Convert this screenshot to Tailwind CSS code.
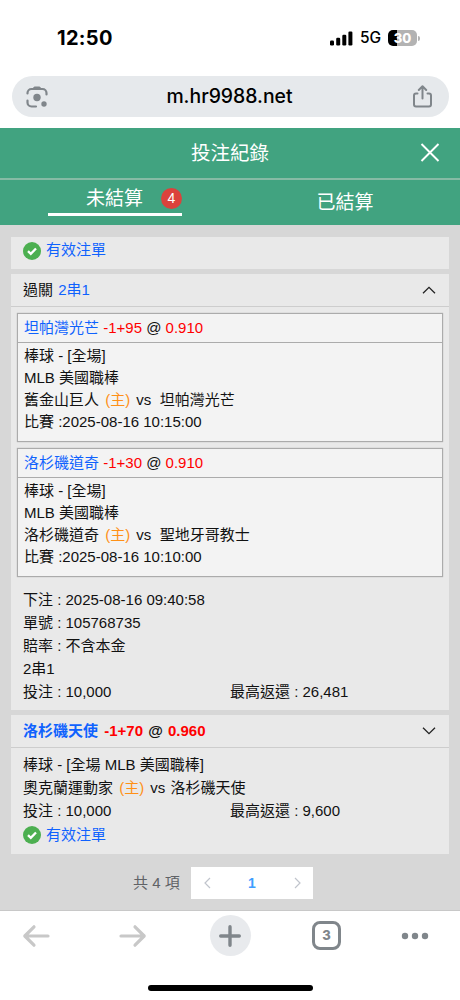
<!DOCTYPE html>
<html lang="zh-Hant">
<head>
  <meta charset="UTF-8" />
  <meta name="viewport" content="width=device-width, initial-scale=1.0"/>
  <title>投注紀錄</title>
  <script src="https://cdn.jsdelivr.net/npm/@tailwindcss/browser@4"></script>
</head>
<body class="w-[460px] h-[1000px] overflow-hidden bg-white flex flex-col text-[15px] text-[#111] font-['Liberation_Sans','Noto_Sans_CJK_TC',sans-serif]">

  <!-- Status bar -->
  <div class="h-[76px] shrink-0 pl-[57px] pr-[40px] flex items-center justify-between text-black font-['Inter',sans-serif]">
    <span class="text-[20px] font-bold tracking-[0.3px]">12:50</span>
    <div class="flex items-center">
      <svg class="w-[23px] h-[15px]" viewBox="0 0 23 15" fill="#000">
        <rect x="0" y="9.5" width="4" height="5" rx="1.2"/>
        <rect x="6.2" y="6.8" width="4" height="7.7" rx="1.2"/>
        <rect x="12.3" y="3.7" width="4" height="10.8" rx="1.2"/>
        <rect x="18.4" y="0.5" width="4" height="14" rx="1.2"/>
      </svg>
      <span class="ml-[7px] w-[22px] text-[15.500px] font-medium">5G</span>
      <div class="ml-[6px] w-[29px] h-4 rounded-[5px] bg-linear-to-r from-black from-[30%] to-[#b3b3b3] to-[30%] text-white text-[13px] leading-4 font-extrabold text-center">30</div>
      <div class="ml-px w-[2px] h-[5px] rounded-r-full bg-[#b3b3b3]"></div>
    </div>
  </div>

  <!-- Address bar -->
  <div class="h-[41px] shrink-0 mx-[11.5px] mb-[11px] pl-[14px] pr-[15px] rounded-full bg-[#e6e9ec] flex items-center justify-between">
    <svg class="w-[22px] h-[22px]" viewBox="0 0 22 22" fill="none" stroke="#80868b" stroke-width="2.200" stroke-linecap="round">
      <path d="M1.500 7.500V7a4 4 0 0 1 4-4h11a4 4 0 0 1 4 4V8.500M1.500 14.500v2a4 4 0 0 0 4 4h4.500"/>
      <path d="M7 3l1.200-2h5.600l1.200 2z" fill="#80868b" stroke-width="1"/>
      <circle cx="11" cy="11.500" r="3.700" fill="#80868b" stroke="none"/>
      <circle cx="18" cy="18" r="2.700" fill="#80868b" stroke="none"/>
    </svg>
    <span class="text-[19.400px] font-medium text-black font-['Inter',sans-serif]">m.hr9988.net</span>
    <svg class="w-[22px] h-[24px]" viewBox="0 0 22 24" fill="none" stroke="#80868b" stroke-width="2" stroke-linecap="round" stroke-linejoin="round">
      <path d="M5.500 8.500H4a2 2 0 0 0-2 2v9a2 2 0 0 0 2 2h13a2 2 0 0 0 2-2v-9a2 2 0 0 0-2-2h-1.500"/>
      <path d="M10.500 13.500V2M6.800 5l3.700-3.700L14.200 5"/>
    </svg>
  </div>

  <!-- Page header -->
  <div class="h-[52px] shrink-0 bg-[#41a380] border-b-2 border-[#86bba5] grid grid-cols-[60px_1fr_60px] items-center text-white">
    <span></span>
    <h1 class="pt-[2px] text-[19.5px] text-center">投注紀錄</h1>
    <svg class="w-[20px] h-[20px] justify-self-center" viewBox="0 0 20 20" stroke="#fff" stroke-width="1.900">
      <path d="M1.500 1l17 17M18.500 1l-17 17"/>
    </svg>
  </div>
  <div class="h-[45px] shrink-0 bg-[#41a380] flex text-white text-[19px]">
    <div class="w-1/2 flex justify-center">
      <div class="w-[134px] h-[36px] border-b-[3px] border-white flex items-center justify-end">
        <span class="leading-[36px] pt-[4px]">未結算</span>
        <span class="mt-[4px] ml-[18px] w-[21px] h-[21px] rounded-full bg-[#db423c] text-sm leading-[21px] text-center">4</span>
      </div>
    </div>
    <div class="w-1/2 text-center leading-[45px]">已結算</div>
  </div>

  <!-- Bet list -->
  <main class="h-[686px] shrink-0 px-[11px] pt-[12px] bg-[#d7d7d7] border-b border-[#c8c8c8]">

    <section class="h-[32px] pl-[12px] bg-[#e9e9e9] flex items-start text-[#0f62fe] leading-[26px]">
      <svg class="w-[18px] h-[18px] mr-[5px] mt-[4.500px]" viewBox="0 0 18 18">
        <circle cx="9" cy="9" r="9" fill="#4caf50"/>
        <path d="M5 9.200l2.800 2.700L13 6.500" fill="none" stroke="#fff" stroke-width="2.300"/>
      </svg>
      有效注單
    </section>

    <section class="mt-[5px] h-[436px] bg-[#e9e9e9]">
      <div class="h-[33px] px-[12px] border-b border-[#cdcdcd] flex items-center justify-between">
        <span>過關 <span class="ml-px text-[#0f62fe]">2串1</span></span>
        <svg class="w-[14px] h-[8px] mr-[1px]" viewBox="0 0 14 8" fill="none" stroke="#222" stroke-width="1.300"><path d="M1 7.300l6-6 6 6"/></svg>
      </div>

      <div class="mx-[6px] mt-[6px] h-[129px] bg-[#f3f3f3] border border-[#ababab] shadow-[0_0_1px_#ababab]">
        <div class="h-[29px] pl-[6px] border-b border-[#ababab] leading-[28px]">
          <span class="text-[#0f62fe]">坦帕灣光芒</span> <span class="text-[#f00]">-1+95</span> @ <span class="text-[#f00]">0.910</span>
        </div>
        <div class="pl-[6px] pt-[2px] leading-[22px]">
          <p>棒球 - [全場]</p>
          <p>MLB 美國職棒</p>
          <p>舊金山巨人 <span class="mx-[2px] text-[#ff9017]">(主)</span> vs &nbsp;坦帕灣光芒</p>
          <p>比賽 :2025-08-16 10:15:00</p>
        </div>
      </div>

      <div class="mx-[6px] mt-[6px] h-[129px] bg-[#f3f3f3] border border-[#ababab] shadow-[0_0_1px_#ababab]">
        <div class="h-[29px] pl-[6px] border-b border-[#ababab] leading-[28px]">
          <span class="text-[#0f62fe]">洛杉磯道奇</span> <span class="text-[#f00]">-1+30</span> @ <span class="text-[#f00]">0.910</span>
        </div>
        <div class="pl-[6px] pt-[2px] leading-[22px]">
          <p>棒球 - [全場]</p>
          <p>MLB 美國職棒</p>
          <p>洛杉磯道奇 <span class="mx-[2px] text-[#ff9017]">(主)</span> vs &nbsp;聖地牙哥教士</p>
          <p>比賽 :2025-08-16 10:10:00</p>
        </div>
      </div>

      <div class="px-[12px] pt-[12px] leading-[22.900px]">
        <p>下注 : 2025-08-16 09:40:58</p>
        <p>單號 : 105768735</p>
        <p>賠率 : 不含本金</p>
        <p>2串1</p>
        <div class="grid grid-cols-2">
          <p>投注 : 10,000</p>
          <p>最高返還 : 26,481</p>
        </div>
      </div>
    </section>

    <section class="mt-[5px] h-[139px] bg-[#e9e9e9]">
      <div class="h-[33px] px-[12px] border-b border-[#cdcdcd] flex items-center justify-between font-bold">
        <span><span class="text-[#0f62fe]">洛杉磯天使</span> <span class="ml-[2px] mr-px text-[#f00]">-1+70</span> @ <span class="ml-px text-[#f00]">0.960</span></span>
        <svg class="w-[14px] h-[8px] mr-[1px]" viewBox="0 0 14 8" fill="none" stroke="#222" stroke-width="1.300"><path d="M1 .7l6 6 6-6"/></svg>
      </div>
      <div class="px-[12px] pt-[6px] leading-[22.800px]">
        <p>棒球 - [全場 MLB 美國職棒]</p>
        <p>奧克蘭運動家 <span class="mx-[2px] text-[#ff9017]">(主)</span> vs <span class="ml-px">洛杉磯天使</span></p>
        <div class="grid grid-cols-2">
          <p>投注 : 10,000</p>
          <p>最高返還 : 9,600</p>
        </div>
        <div class="flex items-center text-[#0f62fe] leading-[25px]">
          <svg class="w-[18px] h-[18px] mr-[5px]" viewBox="0 0 18 18">
            <circle cx="9" cy="9" r="9" fill="#4caf50"/>
            <path d="M5 9.200l2.800 2.700L13 6.500" fill="none" stroke="#fff" stroke-width="2.300"/>
          </svg>
          有效注單
        </div>
      </div>
    </section>

    <!-- Pagination -->
    <div class="mt-[13px] pl-[122px] flex items-center text-sm text-[#606266]">
      <span class="w-[58px] text-[15px]">共 4 項</span>
      <div class="w-[122px] h-[32px] bg-white grid grid-cols-[32px_58px_32px] items-center justify-items-center">
        <svg class="w-[7px] h-[12px]" viewBox="0 0 7 12" fill="none" stroke="#c0c4cc" stroke-width="1.200"><path d="M6 1L1 6l5 5"/></svg>
        <span class="font-bold text-[#409eff]">1</span>
        <svg class="w-[7px] h-[12px]" viewBox="0 0 7 12" fill="none" stroke="#c0c4cc" stroke-width="1.200"><path d="M1 1l5 5-5 5"/></svg>
      </div>
    </div>
  </main>

  <!-- Browser toolbar -->
  <footer class="grow flex flex-col items-center justify-between pt-[4px] pb-[9px]">
    <div class="w-full h-[41px] grid grid-cols-[72px_122px_72px_121px_56px] items-center justify-items-center">
      <svg class="w-[28px] h-[24px]" viewBox="0 0 28 24" fill="none" stroke="#c8c8c8" stroke-width="3.200" stroke-linecap="round" stroke-linejoin="round"><path d="M26 12H3M12 2.800L2.800 12l9.200 9.200"/></svg>
      <svg class="w-[28px] h-[24px]" viewBox="0 0 28 24" fill="none" stroke="#c8c8c8" stroke-width="3.200" stroke-linecap="round" stroke-linejoin="round"><path d="M2 12h23M16 2.800l9.200 9.200-9.200 9.200"/></svg>
      <div class="w-[41px] h-[41px] rounded-full bg-[#e8eaed] flex items-center justify-center">
        <svg class="w-[22px] h-[22px]" viewBox="0 0 22 22" stroke="#80868b" stroke-width="3.400" stroke-linecap="round"><path d="M11 1.700v18.600M1.700 11h18.600"/></svg>
      </div>
      <div class="w-[29px] h-[29px] rounded-[8px] border-3 border-[#80868b] flex items-center justify-center text-[13px] font-extrabold text-[#80868b] font-['Inter',sans-serif]">3</div>
      <svg class="w-[28px] h-[8px]" viewBox="0 0 28 8" fill="#80868b"><circle cx="4" cy="4" r="3.200"/><circle cx="14" cy="4" r="3.200"/><circle cx="24" cy="4" r="3.200"/></svg>
    </div>
    <div class="w-[165px] h-[6px] rounded-full bg-black"></div>
  </footer>

</body>
</html>
